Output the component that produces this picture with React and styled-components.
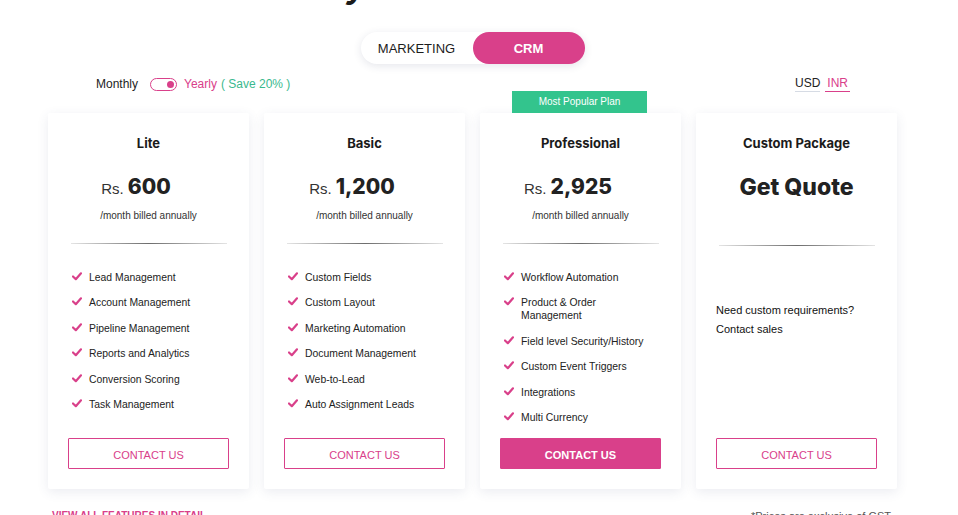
import React from 'react';
import styled, { createGlobalStyle, css } from 'styled-components';

const PINK = '#d9408a';
const GREEN = '#33c48d';
const HEAD = '"Inter", "DejaVu Sans", sans-serif';
const BODY = '"Liberation Sans", Arial, sans-serif';

const GlobalStyle = createGlobalStyle`
  html, body {
    margin: 0;
    padding: 0;
    background: #fff;
    overflow: hidden;
  }
  body {
    font-family: ${BODY};
    color: #222;
  }
`;

const Page = styled.div`
  width: 945px;
  height: 515px;
  overflow: hidden;
`;

const Title = styled.h1`
  margin: -28px 0 0;
  font-family: ${HEAD};
  font-size: 30px;
  line-height: 32px;
  font-weight: 800;
  font-style: italic;
  text-align: center;
  color: #1b1b1b;
  letter-spacing: -0.5px;
`;

const SwitchWrap = styled.div`
  display: flex;
  justify-content: center;
  margin-top: 28px;
`;

const Segmented = styled.div`
  display: flex;
  width: 224px;
  height: 32px;
  border-radius: 16px;
  background: #fff;
  box-shadow: 0 2px 8px rgba(40, 50, 90, 0.12);
`;

const Segment = styled.button`
  flex: 1;
  border: 0;
  border-radius: 16px;
  background: transparent;
  font-family: ${BODY};
  font-size: 13px;
  color: #1c1c1c;
  cursor: pointer;
  ${(p) => p.active && css`
    background: ${PINK};
    color: #fff;
    font-weight: 700;
  `}
`;

const Options = styled.div`
  display: flex;
  justify-content: space-between;
  align-items: center;
  height: 20px;
  margin: 10px 95px 0 96px;
  font-size: 12px;
`;

const Billing = styled.div`
  display: flex;
  align-items: center;
`;

const Label = styled.span`
  margin-right: 12px;
`;

const Track = styled.span`
  display: inline-flex;
  align-items: center;
  justify-content: flex-end;
  box-sizing: border-box;
  width: 27px;
  height: 13px;
  margin-right: 7px;
  padding: 0 2px;
  border: 1.5px solid ${PINK};
  border-radius: 7px;
`;

const Knob = styled.span`
  width: 7px;
  height: 7px;
  border-radius: 50%;
  background: ${PINK};
`;

const Yearly = styled.span`
  color: ${PINK};
`;

const Save = styled.span`
  color: #3ab98e;
  margin-left: 4px;
`;

const Currency = styled.div`
  display: flex;
  gap: 5px;
`;

const CurrencyItem = styled.span`
  padding-bottom: 1px;
  border-bottom: 1px solid #d6dbe4;
  color: #222;
  ${(p) => p.active && css`
    color: ${PINK};
    border-bottom-color: ${PINK};
    padding: 0 2px 1px;
  `}
`;

const Cards = styled.div`
  display: grid;
  grid-template-columns: repeat(4, 201px);
  gap: 15px;
  margin: 19px 0 0 48px;
`;

const Card = styled.div`
  position: relative;
  display: flex;
  flex-direction: column;
  box-sizing: border-box;
  height: 376px;
  padding: 22px 20px 20px;
  background: #fff;
  border-radius: 2px;
  box-shadow: 0 3px 12px rgba(60, 70, 120, 0.1);
`;

const Badge = styled.div`
  position: absolute;
  top: -22px;
  left: 32px;
  width: 135px;
  height: 22px;
  background: ${GREEN};
  color: #fff;
  font-size: 10px;
  line-height: 22px;
  text-align: center;
`;

const PlanName = styled.h3`
  margin: 0;
  font-family: ${HEAD};
  font-size: 13px;
  line-height: 16px;
  font-weight: 700;
  text-align: center;
  color: #1b1b1b;
`;

const Price = styled.div`
  display: flex;
  justify-content: center;
  align-items: baseline;
  gap: 4px;
  margin-top: 22px;
  padding-right: ${(p) => (p.quote ? '0' : '25px')};
  height: 28px;
  line-height: 28px;
`;

const Symbol = styled.span`
  font-size: 15px;
  color: #333;
`;

const Amount = styled.span`
  font-family: ${HEAD};
  font-size: ${(p) => (p.quote ? '23px' : '21px')};
  font-weight: 800;
  color: #222;
`;

const Period = styled.div`
  margin-top: 8px;
  font-size: 10px;
  line-height: 14px;
  text-align: center;
  color: #333;
`;

const Divider = styled.div`
  width: 156px;
  height: 1px;
  margin: ${(p) => (p.spaced ? '44px' : '20px')} auto 0;
  background: linear-gradient(to right, #e4e4e4, #6d6d6d 50%, #e4e4e4);
`;

const Features = styled.ul`
  display: flex;
  flex-direction: column;
  gap: 12.4px;
  margin: 27px 0 0;
  padding: 0 0 0 4px;
  list-style: none;
`;

const Feature = styled.li`
  display: flex;
  gap: 7px;
  font-size: 10.4px;
  line-height: 13px;
  color: #222;
`;

const FeatureText = styled.span`
  max-width: ${(p) => (p.narrow ? '110px' : 'none')};
`;

const Check = styled.svg`
  flex-shrink: 0;
  width: 10px;
  height: 9px;
  margin-top: 1px;
`;

const Note = styled.p`
  margin: 55px 0 0;
  font-size: 11px;
  line-height: 19px;
  color: #111;
`;

const Button = styled.button`
  margin-top: auto;
  height: 31px;
  border: 1px solid ${PINK};
  border-radius: 1px;
  background: #fff;
  color: ${PINK};
  font-family: ${BODY};
  font-size: 11px;
  padding-top: 3px;
  cursor: pointer;
  ${(p) => p.primary && css`
    background: ${PINK};
    color: #fff;
    font-weight: 700;
  `}
`;

const Footer = styled.div`
  display: flex;
  justify-content: space-between;
  margin: 21px 54px 0 52px;
  font-size: 10px;
`;

const ViewAll = styled.a`
  color: ${PINK};
  font-weight: 700;
  text-decoration: underline;
`;

const Disclaimer = styled.span`
  color: #555;
  font-size: 11px;
`;

const CheckIcon = () => (
  <Check viewBox="0 0 10 9">
    <polyline points="1,4.5 3.8,7.2 9,1.3" fill="none" stroke={PINK} strokeWidth="2.2" strokeLinecap="round" strokeLinejoin="round" />
  </Check>
);

const plans = [
  {
    name: 'Lite',
    price: '600',
    features: ['Lead Management', 'Account Management', 'Pipeline Management', 'Reports and Analytics', 'Conversion Scoring', 'Task Management'],
  },
  {
    name: 'Basic',
    price: '1,200',
    features: ['Custom Fields', 'Custom Layout', 'Marketing Automation', 'Document Management', 'Web-to-Lead', 'Auto Assignment Leads'],
  },
  {
    name: 'Professional',
    price: '2,925',
    popular: true,
    features: ['Workflow Automation', 'Product & Order Management', 'Field level Security/History', 'Custom Event Triggers', 'Integrations', 'Multi Currency'],
  },
];

const App = () => (
  <Page>
    <GlobalStyle />
    <Title>Make your sales smarter now</Title>
    <SwitchWrap>
      <Segmented>
        <Segment>MARKETING</Segment>
        <Segment active>CRM</Segment>
      </Segmented>
    </SwitchWrap>
    <Options>
      <Billing>
        <Label>Monthly</Label>
        <Track><Knob /></Track>
        <Yearly>Yearly</Yearly>
        <Save>( Save 20% )</Save>
      </Billing>
      <Currency>
        <CurrencyItem>USD</CurrencyItem>
        <CurrencyItem active>INR</CurrencyItem>
      </Currency>
    </Options>
    <Cards>
      {plans.map((plan) => (
        <Card key={plan.name}>
          {plan.popular && <Badge>Most Popular Plan</Badge>}
          <PlanName>{plan.name}</PlanName>
          <Price>
            <Symbol>Rs.</Symbol>
            <Amount>{plan.price}</Amount>
          </Price>
          <Period>/month billed annually</Period>
          <Divider />
          <Features>
            {plan.features.map((f) => (
              <Feature key={f}>
                <CheckIcon />
                <FeatureText narrow={f.includes('&')}>{f}</FeatureText>
              </Feature>
            ))}
          </Features>
          <Button primary={plan.popular}>CONTACT US</Button>
        </Card>
      ))}
      <Card>
        <PlanName>Custom Package</PlanName>
        <Price quote>
          <Amount quote>Get Quote</Amount>
        </Price>
        <Divider spaced />
        <Note>
          Need custom requirements?
          <br />
          Contact sales
        </Note>
        <Button>CONTACT US</Button>
      </Card>
    </Cards>
    <Footer>
      <ViewAll>VIEW ALL FEATURES IN DETAIL</ViewAll>
      <Disclaimer>*Prices are exclusive of GST</Disclaimer>
    </Footer>
  </Page>
);

export default App;
